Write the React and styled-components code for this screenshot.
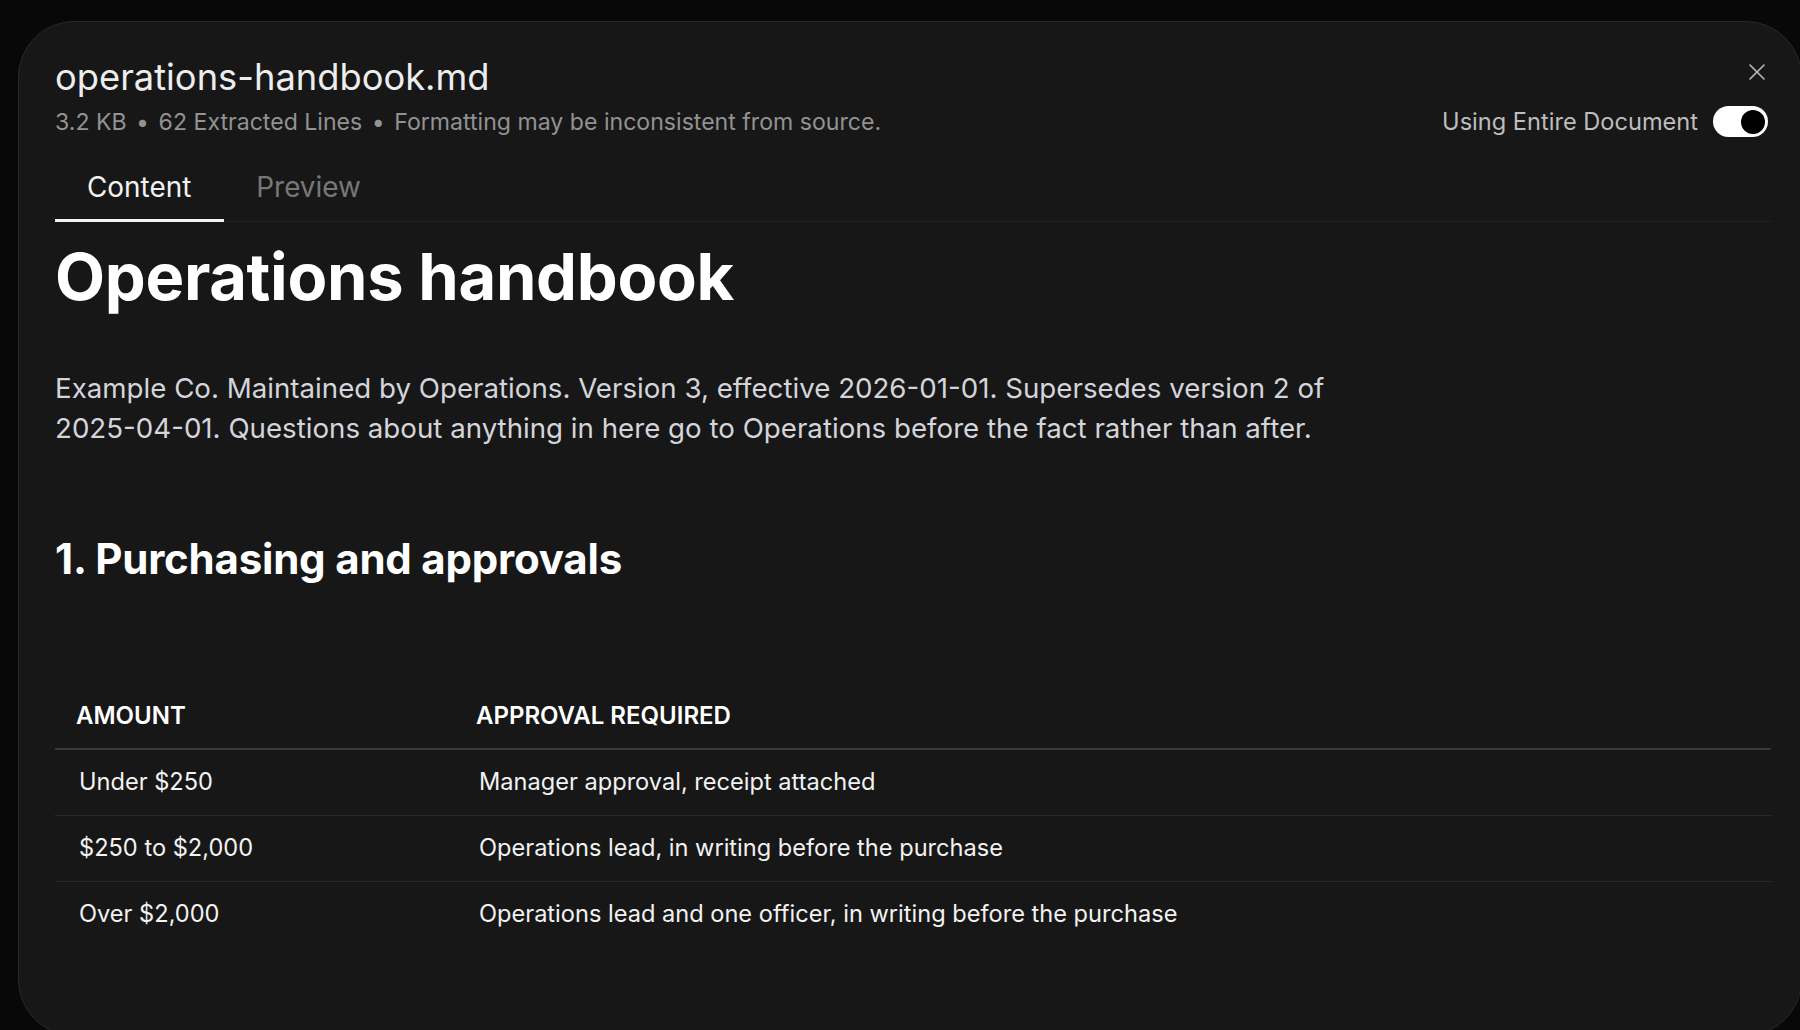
import React, { useState } from "react";
import styled, { createGlobalStyle } from "styled-components";
import { X } from "lucide-react";

const Global = createGlobalStyle`
  html, body {
    margin: 0;
    padding: 0;
    background: #080808;
    overflow: hidden;
  }
  body {
    font-family: Inter, "Noto Sans", "Liberation Sans", sans-serif;
  }
  * { box-sizing: border-box; }
`;

const rows = [
  { amount: "Under $250", approval: "Manager approval, receipt attached" },
  { amount: "$250 to $2,000", approval: "Operations lead, in writing before the purchase" },
  { amount: "Over $2,000", approval: "Operations lead and one officer, in writing before the purchase" },
];

export default function App() {
  const [tab, setTab] = useState("content");
  const [entire, setEntire] = useState(true);

  return (
    <>
      <Global />
      <Panel>
        <Header>
          <div>
            <FileName>operations-handbook.md</FileName>
            <Meta>
              3.2 KB <Dot>•</Dot> 62 Extracted Lines <Dot>•</Dot> Formatting may be
              inconsistent from source.
            </Meta>
          </div>
          <HeaderRight>
            <CloseButton aria-label="Close">
              <X size={28} strokeWidth={1.4} />
            </CloseButton>
            <ToggleRow>
              <span>Using Entire Document</span>
              <Toggle $on={entire} onClick={() => setEntire(!entire)}>
                <Knob />
              </Toggle>
            </ToggleRow>
          </HeaderRight>
        </Header>

        <TabBar>
          <Tab $active={tab === "content"} onClick={() => setTab("content")}>
            Content
          </Tab>
          <Tab $active={tab === "preview"} onClick={() => setTab("preview")}>
            Preview
          </Tab>
        </TabBar>

        <Doc>
          <H1>Operations handbook</H1>
          <Para>
            Example Co. Maintained by Operations. Version 3, effective 2026-01-01. Supersedes
            version 2 of
            <br />
            2025-04-01. Questions about anything in here go to Operations before the fact rather
            than after.
          </Para>
          <H2>1. Purchasing and approvals</H2>

          <Table>
            <HeadRow>
              <HeadCell>Amount</HeadCell>
              <HeadCell>Approval required</HeadCell>
            </HeadRow>
            {rows.map((r) => (
              <BodyRow key={r.amount}>
                <Cell>{r.amount}</Cell>
                <Cell>{r.approval}</Cell>
              </BodyRow>
            ))}
          </Table>
        </Doc>
      </Panel>
    </>
  );
}

const Panel = styled.div`
  margin: 21px 0 0 18px;
  width: 1784px;
  height: 1015px;
  background: #171717;
  border: 1px solid #282828;
  border-radius: 56px;
  padding: 33px 30px 0 36px;
  overflow: hidden;
`;

const Header = styled.div`
  display: flex;
  justify-content: space-between;
  align-items: flex-start;
`;

const FileName = styled.div`
  color: #ededed;
  font-size: 36.3px;
  line-height: 44px;
  font-weight: 400;
`;

const Meta = styled.div`
  margin-top: 8px;
  color: #929292;
  font-size: 23.1px;
  line-height: 30px;
`;

const Dot = styled.span`
  margin: 0 3px;
`;

const HeaderRight = styled.div`
  display: flex;
  flex-direction: column;
  align-items: flex-end;
`;

const CloseButton = styled.button`
  margin-top: 3px;
  width: 28px;
  height: 28px;
  padding: 0;
  border: none;
  background: transparent;
  color: #b8b8b8;
  display: flex;
  align-items: center;
  justify-content: center;
  cursor: pointer;
`;

const ToggleRow = styled.div`
  margin-top: 20px;
  display: flex;
  align-items: center;
  gap: 15px;
  color: #bdbdbd;
  font-size: 23.6px;
  line-height: 30px;
  padding-right: 3px;
`;

const Toggle = styled.button`
  width: 55px;
  height: 31px;
  border-radius: 16px;
  border: none;
  padding: 0 3px;
  background: ${(p) => (p.$on ? "#ffffff" : "#444")};
  display: flex;
  align-items: center;
  justify-content: ${(p) => (p.$on ? "flex-end" : "flex-start")};
  cursor: pointer;
`;

const Knob = styled.span`
  width: 24px;
  height: 24px;
  border-radius: 50%;
  background: #000;
`;

const TabBar = styled.div`
  margin-top: 22px;
  display: flex;
  border-bottom: 1px solid #222222;
`;

const Tab = styled.button`
  padding: 11px 33px 15px 32px;
  background: transparent;
  border: none;
  border-bottom: 3px solid ${(p) => (p.$active ? "#f2f2f2" : "transparent")};
  margin-bottom: -1px;
  color: ${(p) => (p.$active ? "#f2f2f2" : "#777777")};
  font-family: inherit;
  font-size: 27.9px;
  line-height: 34px;
  cursor: pointer;
`;

const Doc = styled.div`
  padding-top: 17px;
`;

const H1 = styled.h1`
  margin: 0;
  color: #ffffff;
  font-size: 65px;
  line-height: 76px;
  font-weight: 700;
  letter-spacing: -0.3px;
`;

const Para = styled.p`
  margin: 53px 0 0;
  color: #d3d5db;
  font-size: 27.7px;
  line-height: 40px;
`;

const H2 = styled.h2`
  margin: 86px 0 0;
  color: #ffffff;
  font-size: 42px;
  line-height: 50px;
  font-weight: 700;
  letter-spacing: -0.2px;
`;

const Table = styled.div`
  margin-top: 98px;
`;

const HeadRow = styled.div`
  display: grid;
  grid-template-columns: 400px 1fr;
  border-bottom: 2px solid #383838;
`;

const HeadCell = styled.div`
  padding: 20px 21px 18px;
  color: #ffffff;
  font-size: 24px;
  line-height: 28px;
  font-weight: 600;
  text-transform: uppercase;
`;

const BodyRow = styled.div`
  display: grid;
  grid-template-columns: 400px 1fr;
  border-bottom: 1px solid #2a2a2a;
  &:last-child {
    border-bottom: none;
  }
`;

const Cell = styled.div`
  padding: 18px 24px 19px;
  color: #f2f2f2;
  font-size: 23.6px;
  line-height: 28px;
`;
